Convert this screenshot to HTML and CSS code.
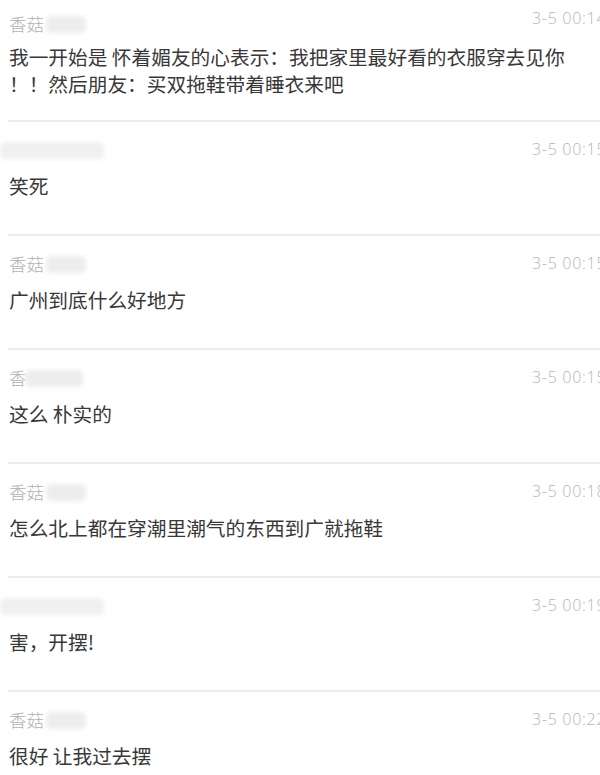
FILE: index.html
```html
<!DOCTYPE html>
<html lang="zh-CN">
<head>
    <meta charset="UTF-8">
    <meta name="viewport" content="width=device-width, initial-scale=1.0">
    <title>评论</title>
    <link rel="stylesheet" href="styles.css">
</head>
<body>
    <div class="comments">
        <!-- 1 -->
        <div class="comment">
            <div class="comment-head">
                <span class="name">香菇<span class="blur blur-short"></span></span>
                <span class="time">3-5 00:14</span>
            </div>
            <div class="text">我一开始是 怀着媚友的心表示：我把家里最好看的衣服穿去见你<br>！！然后朋友：买双拖鞋带着睡衣来吧</div>
        </div>

        <!-- 2 -->
        <div class="comment">
            <div class="comment-head">
                <span class="name"><span class="blur blur-wide"></span></span>
                <span class="time">3-5 00:15</span>
            </div>
            <div class="text">笑死</div>
        </div>

        <!-- 3 -->
        <div class="comment">
            <div class="comment-head">
                <span class="name">香菇<span class="blur blur-short"></span></span>
                <span class="time">3-5 00:15</span>
            </div>
            <div class="text">广州到底什么好地方</div>
        </div>

        <!-- 4 -->
        <div class="comment">
            <div class="comment-head">
                <span class="name">香<span class="blur blur-mid"></span></span>
                <span class="time">3-5 00:15</span>
            </div>
            <div class="text">这么 朴实的</div>
        </div>

        <!-- 5 -->
        <div class="comment">
            <div class="comment-head">
                <span class="name">香菇<span class="blur blur-short"></span></span>
                <span class="time">3-5 00:18</span>
            </div>
            <div class="text">怎么北上都在穿潮里潮气的东西到广就拖鞋</div>
        </div>

        <!-- 6 -->
        <div class="comment">
            <div class="comment-head">
                <span class="name"><span class="blur blur-wide"></span></span>
                <span class="time">3-5 00:19</span>
            </div>
            <div class="text">害，开摆!</div>
        </div>

        <!-- 7 -->
        <div class="comment">
            <div class="comment-head">
                <span class="name">香菇<span class="blur blur-short"></span></span>
                <span class="time">3-5 00:22</span>
            </div>
            <div class="text">很好 让我过去摆</div>
        </div>
    </div>
</body>
</html>
```

FILE: styles.css
```css
body {
    margin: 0;
    padding: 0;
    background: #fff;
    font-family: "Noto Sans CJK SC", "Noto Sans", sans-serif;
    overflow: hidden;
}

.comments {
    padding-left: 8px;
}

.comment {
    padding: 14px 0 34px 1px;
    border-bottom: 2px solid #ebebeb;
}

.comment:first-child {
    padding-top: 10px;
    padding-bottom: 23px;
}

.comment-head {
    display: flex;
    justify-content: space-between;
    align-items: center;
    height: 28px;
}

.name {
    display: flex;
    align-items: center;
    font-size: 17.5px;
    font-weight: 300;
    color: #b0b0b0;
    line-height: 28px;
}

.blur {
    display: inline-block;
    height: 17px;
    background: #ededed;
    border-radius: 5px;
    filter: blur(2px);
}

.blur-short {
    width: 40px;
    margin-left: 2px;
}

.blur-mid {
    width: 58px;
    margin-left: -2px;
}

.blur-wide {
    width: 104px;
    margin-left: -9px;
    background: #f0f0f0;
}

.time {
    width: 68px;
    white-space: nowrap;
    font-family: "Open Sans", sans-serif;
    font-size: 16px;
    font-weight: 300;
    letter-spacing: 0.7px;
    color: #b5b5b5;
    margin-top: -2px;
}

.comment:first-child .time {
    margin-top: -12px;
}

.text {
    margin-top: 8px;
    font-size: 19.7px;
    line-height: 28px;
    color: #383838;
    white-space: nowrap;
}

.comment:first-child .text {
    margin-top: 5px;
    line-height: 27px;
}
```
